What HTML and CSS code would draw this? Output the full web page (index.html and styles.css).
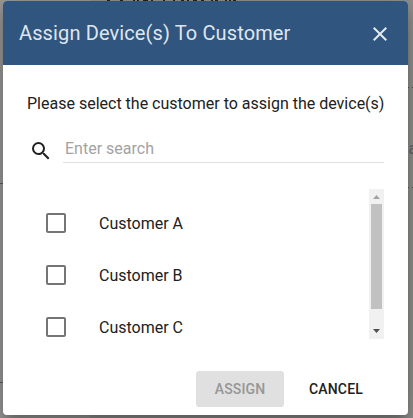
FILE: index.html
```html
<!DOCTYPE html>
<html lang="en">
<head>
<meta charset="utf-8">
<title>Assign Device(s) To Customer</title>
<link rel="stylesheet" href="styles.css">
</head>
<body>
<svg class="backdrop" width="413" height="418" aria-hidden="true">
  <path class="column" d="M0 0h90v418H0z"/>
  <path class="marks" d="M107 .5h3M120 .5h3M133 .5h2M137 .5h2M143 .5h5M151 .5h2M163 .5h2M173 .5h2M181 .5h3M187 .5h2M193 .5h4M201 .5h3M211 .5h2M215 .5h3M225 .5h2M229 .5h2M233 .5h3"/>
  <path class="dots" d="M408 87.5h5M408 187.5h5"/>
  <path class="rule" d="M0 183.500h3M0 382.500h3"/>
  <text x="408.500" y="154">a</text>
</svg>
<main class="dialog">
  <header class="toolbar">
    <h1>Assign Device(s) To Customer</h1>
    <svg class="close" viewBox="0 0 24 24"><path d="M19 6.410 17.590 5 12 10.590 6.410 5 5 6.410 10.590 12 5 17.590 6.410 19 12 13.410 17.590 19 19 17.590 13.410 12z"/></svg>
  </header>
  <section class="content">
    <p>Please select the customer to assign the device(s)</p>
    <div class="search">
      <svg viewBox="0 0 24 24"><path d="M15.500 14h-.79l-.28-.27A6.471 6.471 0 0 0 16 9.500 6.500 6.500 0 1 0 9.500 16c1.610 0 3.090-.59 4.230-1.570l.27.28v.79l5 4.990L20.490 19l-4.990-5zm-6 0C7.010 14 5 11.990 5 9.500S7.010 5 9.500 5 14 7.010 14 9.500 11.990 14 9.500 14z"/></svg>
      <input type="text" placeholder="Enter search" aria-label="Search">
    </div>
    <div class="list">
      <ul>
        <li><span class="box"></span>Customer A</li>
        <li><span class="box"></span>Customer B</li>
        <li><span class="box"></span>Customer C</li>
      </ul>
      <div class="scrollbar">
        <svg viewBox="0 0 15 15"><path class="up" d="M4 10h7L7.500 6z"/></svg>
        <div class="thumb"></div>
        <svg class="bottom" viewBox="0 0 15 15"><path class="down" d="M4 5h7L7.500 9z"/></svg>
      </div>
    </div>
  </section>
  <footer class="actions">
    <button class="assign" disabled>Assign</button>
    <button class="cancel">Cancel</button>
  </footer>
</main>
</body>
</html>
```
FILE: styles.css
```css
* { box-sizing: border-box; }
body {
  margin: 0;
  height: 418px;
  padding: 1px 5px 3px 3px;
  overflow: hidden;
  background: #8f8f8d;
  color: #212121;
  font-family: Roboto, "Liberation Sans", sans-serif;
}
.backdrop { position: absolute; top: 0; left: 0; }
.backdrop text { font-size: 16px; fill: #626262; }
.column { fill: #989896; }
.marks { stroke: #222; }
.dots { stroke: #505050; stroke-dasharray: 1 3; }
.rule { stroke: #5c5c5c; }
.dialog {
  position: relative;
  display: flex;
  flex-direction: column;
  height: 414px;
  border-radius: 4px;
  overflow: hidden;
  background: #fff;
  box-shadow: 0 7px 8px -4px rgba(0,0,0,.2), 0 13px 19px 2px rgba(0,0,0,.14), 0 5px 24px 4px rgba(0,0,0,.12);
}
.toolbar {
  display: flex;
  align-items: center;
  justify-content: space-between;
  height: 64px;
  flex: none;
  padding: 0 16px;
  background: #305680;
}
h1 { margin: 0; font-size: 20px; font-weight: 400; letter-spacing: .12px; color: rgba(255,255,255,.87); }
.close { width: 24px; height: 24px; margin-top: 2px; fill: rgba(255,255,255,.87); }
.content { padding: 25px 24px 0; }
p { margin: 0; font-size: 16px; line-height: 28px; white-space: nowrap; }
.search { display: flex; align-items: flex-start; height: 45px; padding: 17px 0 0 2px; }
.search svg { width: 24px; height: 24px; margin-top: 4px; fill: #212121; }
input {
  width: 321px;
  height: 28px;
  margin-left: 10px;
  padding: 0 2px;
  border: 0;
  border-bottom: 1px solid #e0e0e0;
  outline: 0;
  background: none;
  font: 16px Roboto, "Liberation Sans", sans-serif;
}
input::placeholder { color: #a3a3a3; }
.list { display: flex; height: 150px; margin-top: 26px; overflow: hidden; }
ul { flex: 1; margin: 0; padding: 8px 0 0 19px; list-style: none; }
li { display: flex; align-items: center; height: 52px; font-size: 16px; }
.box { width: 20px; height: 20px; margin-right: 33px; border: 2px solid #757575; border-radius: 2px; }
.scrollbar { display: flex; flex-direction: column; width: 15px; height: 150px; background: #f1f1f1; }
.scrollbar svg { width: 15px; height: 15px; flex: none; }
.thumb { height: 105px; margin: 0 2px; background: #c1c1c1; }
.bottom { margin-top: auto; }
.up { fill: #a3a3a3; }
.down { fill: #505050; }
.actions { display: flex; margin: 32px 0 0 193px; }
button {
  height: 36px;
  padding: 0;
  border: 0;
  border-radius: 3px;
  background: none;
  color: #212121;
  font: 500 14px Roboto, "Liberation Sans", sans-serif;
  letter-spacing: .14px;
  text-transform: uppercase;
}
.assign { width: 88px; background: #e0e0e0; color: #969696; }
.cancel { width: 88px; margin-left: 8px; }
```
